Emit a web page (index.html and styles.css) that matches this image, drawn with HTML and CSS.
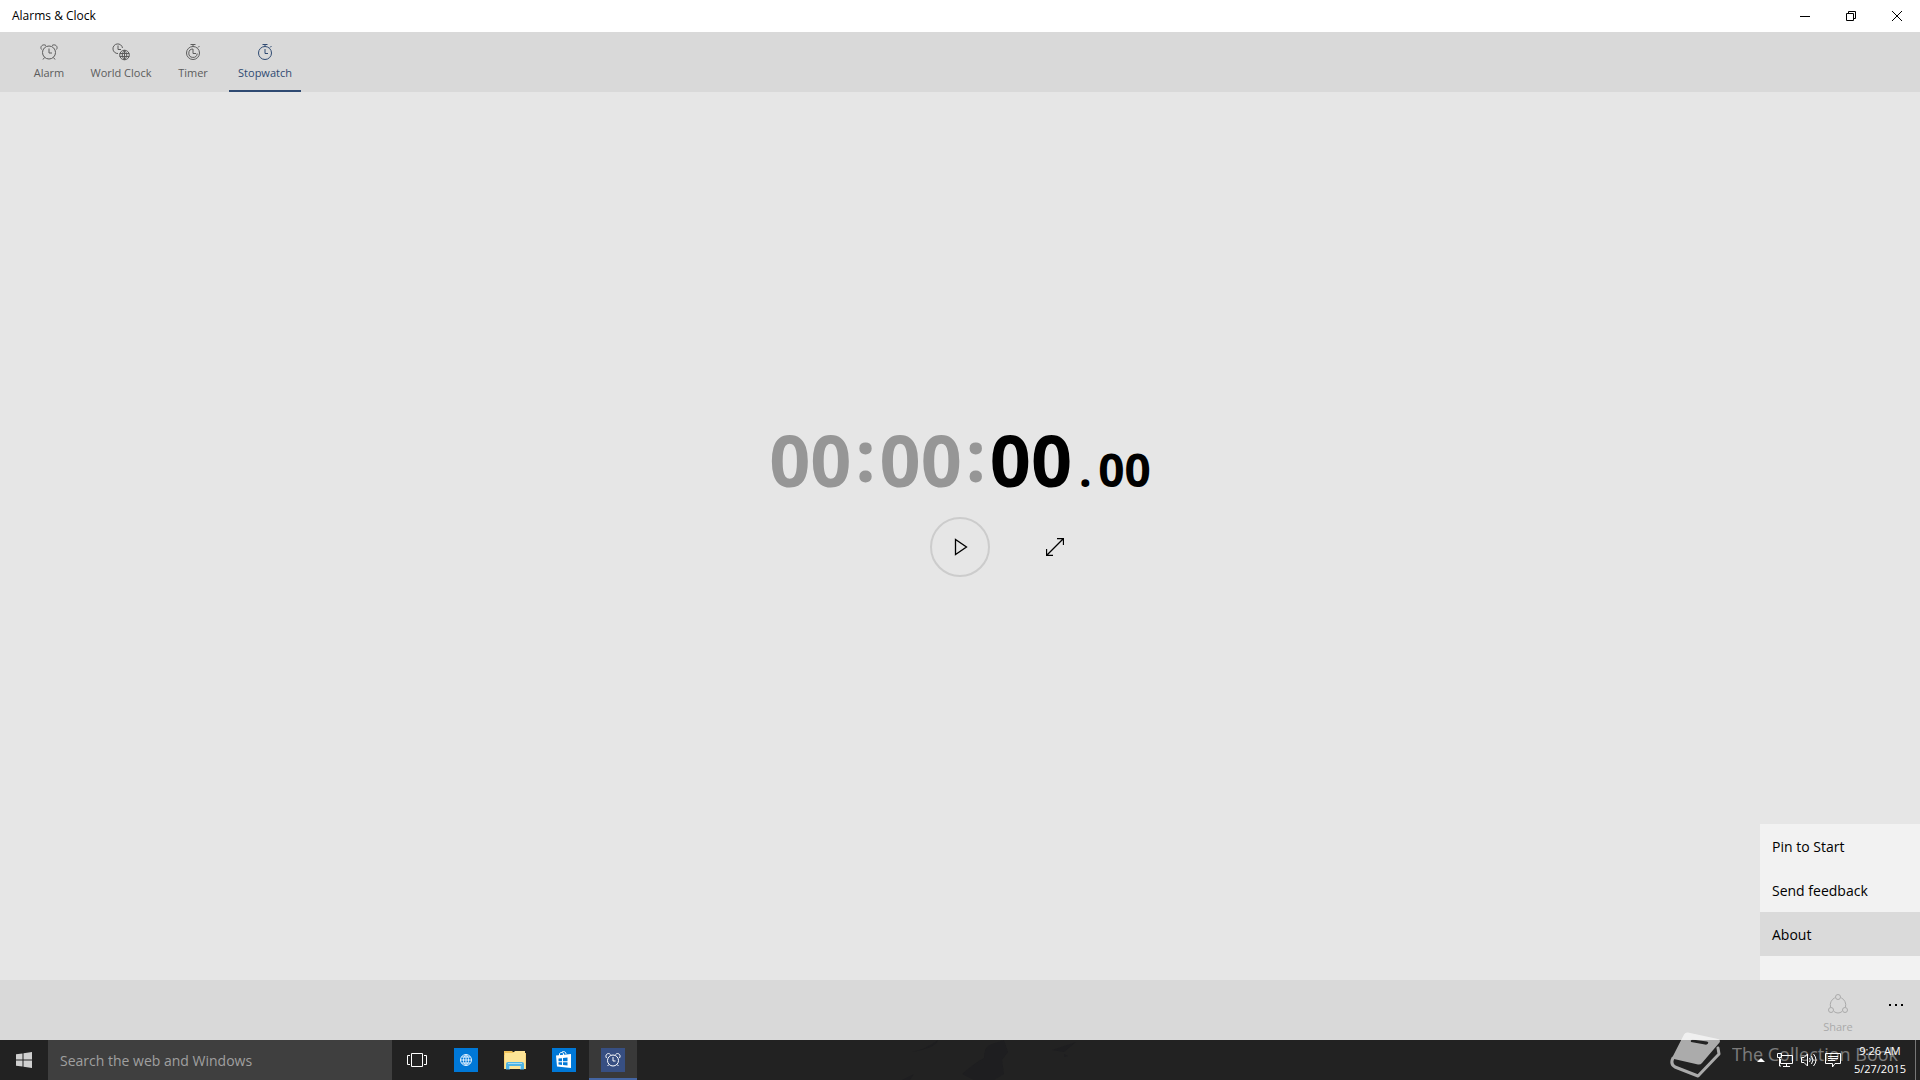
FILE: index.html
```html
<!DOCTYPE html>
<html lang="en">
<head>
<meta charset="UTF-8">
<meta name="viewport" content="width=device-width, initial-scale=1.0">
<title>Alarms &amp; Clock</title>
<link rel="stylesheet" href="styles.css">
</head>
<body>

<header class="titlebar">
  <h1>Alarms &amp; Clock</h1>
  <div class="window-buttons">
    <button aria-label="Minimize">
      <svg width="10" height="10" viewBox="0 0 10 10"><path d="M0 5.5h10"/></svg>
    </button>
    <button aria-label="Restore">
      <svg width="10" height="10" viewBox="0 0 10 10"><path d="M.5 2.5h7v7h-7zM2.5 2.5v-2h7v7h-2"/></svg>
    </button>
    <button aria-label="Close">
      <svg width="10" height="10" viewBox="0 0 10 10"><path d="M0 0l10 10M10 0L0 10"/></svg>
    </button>
  </div>
</header>

<nav class="tabs">
  <a href="#">
    <svg width="18" height="18" viewBox="0 0 18 18"><circle cx="9" cy="9.5" r="6.5"/><path d="M9 5.5v4.5h3M4.5 14.5L3 16.5M13.5 14.5l1.5 2M1.500 6.500C-.5 3.500 3 .5 6 2.500M16.500 6.500c2-3-1.500-6-4.500-4"/></svg>
    <span>Alarm</span>
  </a>
  <a href="#">
    <svg width="18" height="18" viewBox="0 0 18 18"><path d="M6 10.500A4.800 4.800 0 1 1 10.500 5M6 2.500v4h3"/><circle cx="12.500" cy="12" r="4.800"/><path d="M7.700 10.500h9.600M7.700 13.500h9.600M12.500 7.200v9.600M12.500 7.200c-3 3-3 6.600 0 9.600M12.500 7.200c3 3 3 6.600 0 9.600"/></svg>
    <span>World Clock</span>
  </a>
  <a href="#">
    <svg width="18" height="18" viewBox="0 0 18 18"><circle cx="9" cy="10" r="6.500"/><path d="M9 6v4.500h3M9 3.500v-2M6.500 1.500h5M14 4.500l1.500-1.500M9 6a4.200 4.200 0 1 0 4.200 4.500"/></svg>
    <span>Timer</span>
  </a>
  <a href="#" class="active">
    <svg width="18" height="18" viewBox="0 0 18 18"><circle cx="9" cy="10" r="6.500"/><path d="M9 6v4.500h3M9 3.500v-2M6.500 1.500h5M14 4.500l1.500-1.500"/></svg>
    <span>Stopwatch</span>
  </a>
</nav>

<main class="stopwatch">
  <div class="time">
    <span class="dim">00</span>
    <span class="colon">:</span>
    <span class="dim">00</span>
    <span class="colon">:</span>
    <span>00</span>
    <span class="dot">.</span>
    <span class="hundredths">00</span>
  </div>
  <div class="controls">
    <button class="play" aria-label="Start">
      <svg width="16" height="18" viewBox="0 0 16 18"><path d="M3.500 1.500v15L14.500 9z"/></svg>
    </button>
    <button class="expand" aria-label="Expand">
      <svg width="18" height="18" viewBox="0 0 18 18"><path d="M.5 17.500l17-17M11 .5h6.500V7M.5 11v6.500H7"/></svg>
    </button>
  </div>
</main>

<!-- app bar with its open menu -->
<footer class="appbar">
  <div class="menu">
    <button>Pin to Start</button>
    <button>Send feedback</button>
    <button class="hover">About</button>
  </div>
  <button class="share" disabled>
    <svg width="20" height="20" viewBox="0 0 20 20"><path d="M6.800 3.800A8 8 0 0 0 2.500 13M13.200 3.800A8 8 0 0 1 17.500 13M6 17.500c2.500 2 5.500 2 8 0"/><circle cx="10" cy="3" r="2.500"/><circle cx="3" cy="16" r="2.500"/><circle cx="17" cy="16" r="2.500"/></svg>
    <span>Share</span>
  </button>
  <button class="more" aria-label="More">
    <svg width="16" height="4" viewBox="0 0 16 4"><path d="M1 1h2v2H1zM7 1h2v2H7zM13 1h2v2h-2z"/></svg>
  </button>
</footer>

<div class="taskbar">
  <svg class="smoke" width="240" height="40" viewBox="0 0 240 40"><path d="M10 12q14-3 26-12-2 8-26 12zM0 40l12-6-4 6zM60 34q14-12 22-16 0-12 8-14l12-4 4 12-6 8 2 14-10 6H72zM150 10l24-8-12 10zM162 14l4 2-4 1z"/></svg>
  <button class="start" aria-label="Start menu">
    <svg width="16" height="16" viewBox="0 0 16 16"><path d="M0 2.300L6.500 1.400v6.100H0zM7.500 1.200L16 0v7.500H7.500zM0 8.500h6.500v6.100L0 13.700zM7.500 8.500H16V16l-8.500-1.200z"/></svg>
  </button>
  <input class="search" type="text" placeholder="Search the web and Windows" aria-label="Search the web and Windows">
  <div class="apps">
    <button aria-label="Task view">
      <svg width="20" height="14" viewBox="0 0 20 14" fill="none" stroke="#fff"><path d="M4.500.5h11v13h-11zM3 2.500H.5v9H3M17 2.500h2.500v9H17"/></svg>
    </button>
    <button aria-label="Browser">
      <svg width="24" height="24" viewBox="0 0 24 24" fill="none" stroke="#dcefff"><path fill="#0078d7" stroke="none" d="M0 0h24v24H0z"/><circle cx="12" cy="12" r="5.500"/><path d="M6.500 12h11M12 6.500v11M7.500 9h9M7.500 15h9M12 6.500c-3.500 3-3.500 8 0 11M12 6.500c3.500 3 3.500 8 0 11"/></svg>
    </button>
    <button aria-label="File Explorer">
      <svg width="22" height="20" viewBox="0 0 22 20"><path fill="#f2c45c" d="M0 1h8l1 1h12v17H0z"/><path fill="#fde496" d="M1 3h8l2-2h10v18H1z"/><path fill="#f7d478" d="M0 5h1v14H0zM21 3h1v16h-1z"/><path fill="#4eb5e6" d="M2 19.500V14q0-2 2-2h14q2 0 2 2v5.500h-4V16H6v3.500z"/><path fill="#a5dcf2" d="M4 13h14v1H4zM5 16h1v3H5zM16 16h1v3h-1z"/></svg>
    </button>
    <button aria-label="Store">
      <svg width="24" height="24" viewBox="0 0 24 24"><path fill="#0078d7" d="M0 0h24v24H0z"/><path fill="#fff" d="M4 7.500L19 6v14L5 18.500z"/><path fill="none" stroke="#fff" d="M7.500 8V6c0-2 4-2 4 0v1.500M9.500 4.500c1-1.500 4.500-1.200 4.500 1.500"/><path fill="#0078d7" d="M6.500 10.500l3.500-.3v3H6.500zM11 10l4.500-.4v3.600H11zM6.500 14.200H10v2.700l-3.500-.3zM11 14.200h4.500v3.300L11 17z"/></svg>
    </button>
    <button class="current" aria-label="Alarms and Clock">
      <svg width="24" height="24" viewBox="0 0 24 24" fill="none" stroke="#fff"><path fill="#374f82" stroke="none" d="M0 0h24v24H0z"/><circle cx="12" cy="12.500" r="5.500"/><path d="M12 9v4h2.500M8 16.500L6.500 18M16 16.500l1.500 1.500M5.500 10C3.500 7 7 4 9.500 6.500M18.500 10c2-3-1.500-6-4-3.500"/></svg>
    </button>
  </div>

  <div class="watermark">
    <svg width="52" height="48" viewBox="0 0 52 48"><path fill="#fff" fill-rule="evenodd" d="M14 2.500Q15.500 0 18 .5L48 7q3 1 1.500 3.500L32 31q-1.500 2-4 1.500L4 27q-2-1-1-3zM22 7.500q-2 1-1 2.500l14 2.500q2 .5 3-1t-1-2z"/><path fill="none" stroke="#fff" stroke-width="3" stroke-linecap="round" stroke-linejoin="round" d="M3 26q-3 6 2 9l23 9L49 22l-1-6"/></svg>
    <span>The Collection Book</span>
  </div>

  <div class="tray">
    <button aria-label="Show hidden icons">
      <svg width="8" height="4" viewBox="0 0 8 4"><path fill="#fff" d="M0 4l4-4 4 4z"/></svg>
    </button>
    <button aria-label="Network">
      <svg width="16" height="14" viewBox="0 0 16 14" fill="none" stroke="#fff"><path d="M5 2.500h10.500v8H3.500V6M9.500 10.500v3M6 13.500h7M.5.500h4v4h-4zM2.500 5v8H4"/></svg>
    </button>
    <button aria-label="Volume">
      <svg width="16" height="14" viewBox="0 0 16 14" fill="none" stroke="#fff"><path d="M.5 4.500H3L6.500 1v12L3 9.500H.5zM8.500 5q1.500 2 0 4M10.500 3q3 4 0 8M12.500 1q5 6 0 12"/></svg>
    </button>
    <button aria-label="Notifications">
      <svg width="16" height="16" viewBox="0 0 16 16" fill="none" stroke="#fff"><path d="M.5 1.500h15v10H10L7.500 15v-3.500h-7zM3 4.500h10M3 6.500h10M3 8.500h7"/></svg>
    </button>
    <button class="clock"><span>9:26 AM</span><span>5/27/2015</span></button>
    <button class="desktop" aria-label="Show desktop"></button>
  </div>
</div>

</body>
</html>
```
FILE: styles.css
```css
:root {
  --accent: #2f4a72;
  --bar: #d9d9d9;
  --page: #e6e6e6;
  --taskbar: #222;
}

* {
  box-sizing: border-box;
}

body {
  margin: 0;
  min-height: 100vh;
  display: flex;
  flex-direction: column;
  background: var(--page);
  color: #000;
  font-family: "Open Sans", "Noto Sans", sans-serif;
  font-size: 11px;
}

button {
  display: flex;
  align-items: center;
  justify-content: center;
  margin: 0;
  padding: 0;
  border: 0;
  background: none;
  color: inherit;
  font: inherit;
}

svg {
  display: block;
}

/* title bar */
.titlebar {
  display: flex;
  justify-content: space-between;
  height: 32px;
  padding-left: 12px;
  background: #fff;
}

.titlebar h1 {
  margin: 0;
  font-size: 12px;
  font-weight: 400;
  line-height: 32px;
}

.window-buttons {
  display: flex;
}

.window-buttons button {
  width: 46px;
}

.window-buttons svg {
  fill: none;
  stroke: #000;
}

/* tabs */
.tabs {
  display: flex;
  height: 60px;
  padding-left: 13px;
  background: var(--bar);
}

.tabs a {
  width: 72px;
  display: flex;
  flex-direction: column;
  align-items: center;
  gap: 4px;
  padding-top: 11px;
  border-bottom: 2px solid transparent;
  color: #5c5c5c;
  line-height: 16px;
  text-decoration: none;
  white-space: nowrap;
}

.tabs svg {
  fill: none;
  stroke: currentColor;
}

.tabs .active {
  color: var(--accent);
  border-color: var(--accent);
}

/* stopwatch */
.stopwatch {
  flex: 1;
  display: flex;
  flex-direction: column;
  align-items: center;
  justify-content: center;
  gap: 14px;
  padding-bottom: 80px;
}

.time {
  display: flex;
  align-items: baseline;
  font-size: 72px;
  font-weight: 700;
  line-height: 88px;
}

.dim,
.colon {
  color: #969696;
}

.colon {
  width: 28px;
  align-self: flex-start;
  line-height: 78px;
  text-align: center;
}

.dot,
.hundredths {
  font-size: 46px;
  line-height: 46px;
}

.dot {
  width: 26px;
  text-align: center;
}

.controls {
  display: grid;
  grid-template-columns: repeat(3, 60px);
  gap: 35px;
}

.controls button {
  height: 60px;
}

.controls svg {
  fill: none;
  stroke: #000;
  stroke-width: 1.3;
}

.play {
  grid-column: 2;
  border: 2px solid #ccc;
  border-radius: 50%;
}

/* app bar */
.appbar {
  position: relative;
  display: flex;
  justify-content: flex-end;
  height: 60px;
  background: var(--bar);
}

.menu {
  position: absolute;
  right: 0;
  bottom: 100%;
  width: 160px;
  padding-bottom: 24px;
  background: #f2f2f2;
}

.menu button {
  width: 100%;
  height: 44px;
  padding: 0 12px;
  justify-content: flex-start;
  font-size: 14px;
}

.menu .hover {
  background: #dadada;
}

.share {
  width: 68px;
  flex-direction: column;
  justify-content: flex-start;
  gap: 5px;
  padding-top: 14px;
  color: #aaa;
  line-height: 16px;
}

.share svg {
  fill: none;
  stroke: currentColor;
}

.more {
  width: 48px;
  height: 50px;
}

/* taskbar */
.taskbar {
  position: relative;
  display: flex;
  height: 40px;
  background: var(--taskbar);
  color: #fff;
}

.smoke {
  position: absolute;
  left: 47%;
  top: 0;
  fill: #1e1e20;
}

.start {
  width: 48px;
}

.start svg {
  fill: #d0d0d0;
}

.search {
  width: 344px;
  padding: 0 12px;
  border: 0;
  border-radius: 0;
  background: #3f3f3f;
  color: #fff;
  font: 14px "Open Sans", "Noto Sans", sans-serif;
}

.search::placeholder {
  color: #a0a0a0;
}

.apps {
  display: flex;
  gap: 1px;
  padding-left: 1px;
}

.apps button {
  width: 48px;
}

.apps .current {
  border-top: 2px solid transparent;
  border-bottom: 2px solid #4465a2;
  background: #393939;
}

.watermark {
  position: absolute;
  right: 22px;
  bottom: 0;
  display: flex;
  align-items: center;
  gap: 10px;
  font-size: 18px;
  opacity: 0.62;
}

.watermark span {
  opacity: 0.65;
  padding-bottom: 4px;
}

.tray {
  position: relative;
  display: flex;
  margin-left: auto;
}

.tray button {
  width: 24px;
}

.tray .clock {
  width: 70px;
  flex-direction: column;
  line-height: 18px;
}

.tray .desktop {
  width: 5px;
  border-left: 1px solid #777;
}
```
